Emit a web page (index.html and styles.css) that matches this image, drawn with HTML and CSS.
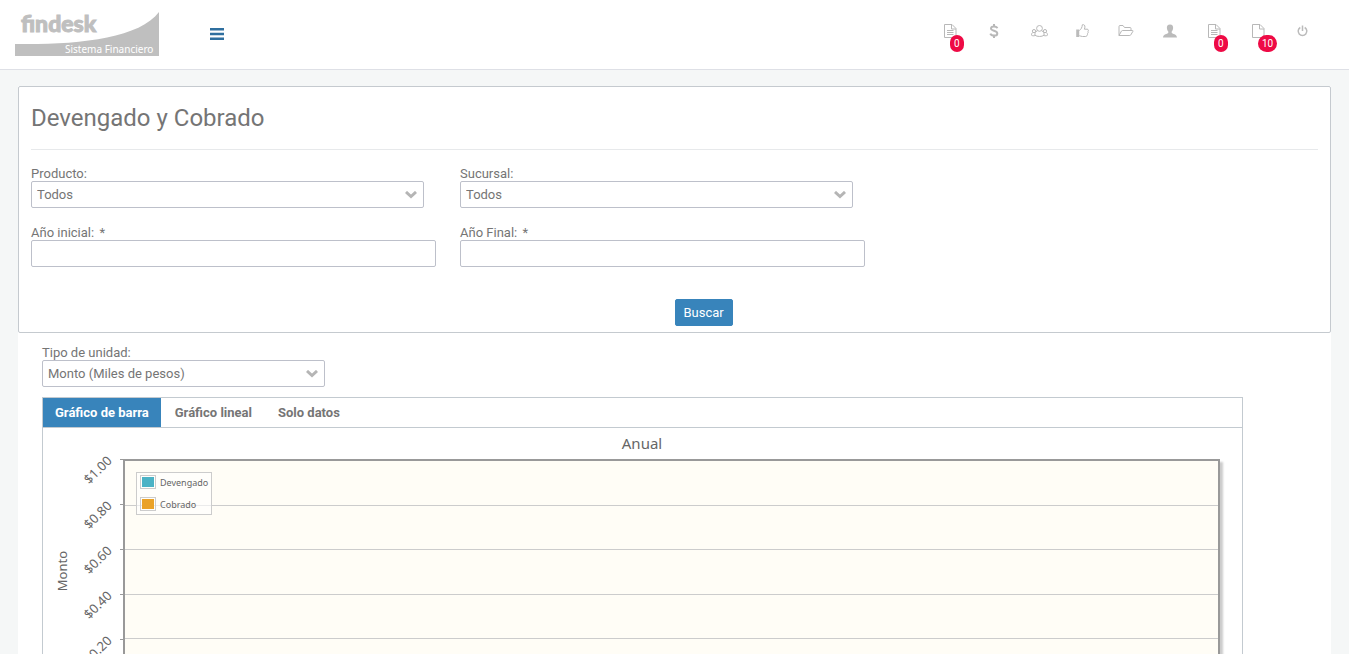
FILE: index.html
```html
<!DOCTYPE html>
<html lang="es">
<head>
<meta charset="utf-8">
<title>Devengado y Cobrado</title>
<link rel="stylesheet" href="styles.css">
</head>
<body>
<header class="topbar">
  <a class="logo" href="#" aria-label="findesk Sistema Financiero">
    <svg width="144" height="44" viewBox="0 0 144 44">
      <path d="M0 32C60 33 124 27 144 0V44H0Z" fill="#bfbfbf"/>
      <text class="logo-name" x="6" y="20">findesk</text>
      <text class="logo-sub" x="50" y="41">Sistema Financiero</text>
    </svg>
  </a>
  <button class="menu-button" type="button" aria-label="Menú">
    <svg width="14" height="12" viewBox="0 0 14 12" fill="#2f6f9f"><path d="M0 0h14v2.500H0zM0 4.700h14v2.500H0zM0 9.400h14v2.500H0z"/></svg>
  </button>
  <nav class="tools">
    <a href="#" aria-label="Documentos"><svg width="13" height="14" viewBox="0 0 13 14"><path class="line" d="M.5.5h7.500l4 4v9H.5zM7.500.5v4.500h4.500M3 6.500h6.500M3 8.500h6.500M3 10.500h6.500"/></svg><span class="badge">0</span></a>
    <a href="#" aria-label="Pagos"><svg width="10" height="14" viewBox="0 0 10 14"><path class="bold" d="M8.300 4.300C7.700 2 2 1.600 2 4.500c0 2.700 6.300 1.900 6.300 4.900 0 3-6 2.800-7 .3M5 0v2.500M5 11.500V14"/></svg></a>
    <a href="#" aria-label="Clientes"><svg class="group" width="17" height="14" viewBox="0 0 17 14"><path class="line" d="M8.500 1.500a2.800 2.800 0 0 1 0 5.800 2.800 2.800 0 0 1 0-5.800zM6.300 6.800C4.300 7.600 3.900 9 3.900 11.200c2.200 1.700 7 1.700 9.200 0 0-2.200-.4-3.600-2.400-4.400M3 5.500a1.500 1.500 0 0 1 0 3.200 1.500 1.500 0 0 1 0-3.200zM14 5.500a1.500 1.500 0 0 1 0 3.200 1.500 1.500 0 0 1 0-3.200zM1.700 8.500C.8 9 .5 9.900.5 11.200c1 .7 2.200.7 3.400.4M15.300 8.500c.9.500 1.200 1.400 1.200 2.700-1 .7-2.200.7-3.400.4"/></svg></a>
    <a href="#" aria-label="Autorizaciones"><svg width="13" height="14" viewBox="0 0 13 14"><path class="solid" d="M.2 5.500h3v7.500h-3z"/><path class="line" d="M3.300 6.500C5 5.500 6.200 3.500 6.300.8c1.500-.6 2.900.5 2.600 2.400L8.400 5.200h2.800c1.400 0 1.500 1.600.8 2.200.4.800.2 1.600-.4 2 .2.800-.1 1.300-.6 1.700 0 1-.5 1.400-1.300 1.400H6.500c-1.200 0-2-.6-3.200-.8"/></svg></a>
    <a href="#" aria-label="Carpetas"><svg width="16" height="14" viewBox="0 0 16 14"><path class="line" d="M1 11.500V2.500c0-.6.300-1 1-1h3l1.500 2H12c.6 0 1 .3 1 1v2M1 11.500l2.500-4.500c.2-.3.500-.5.900-.5H14.500c.5 0 .7.300.5.700L12.700 11c-.2.400-.5.500-.9.500z"/></svg></a>
    <a href="#" aria-label="Usuario"><svg width="14" height="14" viewBox="0 0 14 14"><path class="solid" d="M7 .5c2.400 0 3.300 1.500 3.100 3.600C10 6 9.300 7 8.700 7.600v1.200c.5 1.200 5.300 1.500 5.300 4.700H0c0-3.200 4.800-3.500 5.300-4.700V7.600C4.700 7 4 6 3.900 4.100 3.700 2 4.600.5 7 .5z"/></svg></a>
    <a href="#" aria-label="Solicitudes"><svg width="13" height="14" viewBox="0 0 13 14"><path class="line" d="M.5.5h7.500l4 4v9H.5zM7.500.5v4.500h4.500M3 6.500h6.500M3 8.500h6.500M3 10.500h6.500"/></svg><span class="badge">0</span></a>
    <a href="#" aria-label="Pendientes"><svg width="13" height="14" viewBox="0 0 13 14"><path class="line" d="M.5.5h7.500l4 4v9H.5zM7.500.5v4.500h4.500"/></svg><span class="badge">10</span></a>
    <a href="#" aria-label="Salir"><svg width="11" height="14" viewBox="0 0 11 14"><path class="power" d="M3.300 3.500a4.300 4.300 0 1 0 4.400 0M5.500 1.500v5.500"/></svg></a>
  </nav>
</header>
<main class="page">
  <form class="card">
    <h1 class="title">Devengado y Cobrado</h1>
    <div class="fields">
      <div class="field">
        <label for="producto">Producto:</label>
        <div class="select"><select id="producto"><option>Todos</option></select><svg class="chevron" width="12" height="8" viewBox="0 0 12 8"><path d="M1 1l5 4.500L11 1"/></svg></div>
      </div>
      <div class="field">
        <label for="sucursal">Sucursal:</label>
        <div class="select"><select id="sucursal"><option>Todos</option></select><svg class="chevron" width="12" height="8" viewBox="0 0 12 8"><path d="M1 1l5 4.500L11 1"/></svg></div>
      </div>
      <div class="field first-col">
        <label for="inicial">Año inicial: <span class="required">*</span></label>
        <input id="inicial" type="text">
      </div>
      <div class="field">
        <label for="final">Año Final: <span class="required">*</span></label>
        <input id="final" type="text">
      </div>
    </div>
    <button class="search" type="button">Buscar</button>
  </form>
  <section class="results">
    <div class="unit">
      <label for="unidad">Tipo de unidad:</label>
      <div class="select"><select id="unidad"><option>Monto (Miles de pesos)</option></select><svg class="chevron" width="12" height="8" viewBox="0 0 12 8"><path d="M1 1l5 4.500L11 1"/></svg></div>
    </div>
    <div class="tabs">
      <div class="tab-list" role="tablist">
        <button class="tab active" type="button" role="tab" aria-selected="true">Gráfico de barra</button>
        <button class="tab" type="button" role="tab">Gráfico lineal</button>
        <button class="tab" type="button" role="tab">Solo datos</button>
      </div>
      <div class="chart">
        <h2 class="chart-title">Anual</h2>
        <div class="chart-body">
          <div class="axis-name"><span>Monto</span></div>
          <div class="ticks">
            <div><span>$1.00</span></div><div><span>$0.80</span></div><div><span>$0.60</span></div><div><span>$0.40</span></div><div><span>$0.20</span></div>
          </div>
          <div class="marks"><i></i><i></i><i></i><i></i><i></i></div>
          <div class="plot">
            <i></i><i></i><i></i><i></i><i></i>
            <ul class="legend">
              <li><b class="swatch due"></b>Devengado</li>
              <li><b class="swatch paid"></b>Cobrado</li>
            </ul>
          </div>
        </div>
      </div>
    </div>
  </section>
</main>
</body>
</html>
```
FILE: styles.css
```css
* { box-sizing: border-box; }
body {
  margin: 0;
  height: 100vh;
  overflow: hidden;
  background: #f5f7f7;
  color: #757575;
  font: 13px/15px Roboto, sans-serif;
}
button, input, select { font: inherit; color: inherit; }

.topbar {
  display: flex;
  align-items: center;
  height: 70px;
  padding: 0 25px 2px 15px;
  background: #fff;
  border-bottom: 1px solid #dee0e6;
}
.logo { display: block; height: 44px; }
.logo svg { display: block; overflow: visible; }
.logo-name {
  font: 900 23px Lato, sans-serif;
  fill: #bfbfbf;
  stroke: #bfbfbf;
}
.logo-sub { font: 10px "Noto Sans", sans-serif; fill: #fff; }
.menu-button {
  display: flex;
  margin-left: 51px;
  padding: 0;
  border: 0;
  background: none;
}
.tools { display: flex; margin-left: auto; padding-bottom: 5px; }
.tools a {
  position: relative;
  display: flex;
  justify-content: center;
  width: 44px;
  text-decoration: none;
}
.group { margin-left: 2px; }
.line, .bold, .power { fill: none; stroke: #b8b8b8; }
.bold { stroke-width: 2; }
.power { stroke: #bbb; stroke-width: 1.5; }
.solid { fill: #bbb; }
.badge {
  position: absolute;
  left: 22px;
  top: 11px;
  padding: 1px 4px;
  border-radius: 9px;
  background: #ee0a45;
  color: #fff;
  font-size: 10px;
}

.page { min-height: 100vh; margin: 16px 18px 0; background: #fff; }
.card {
  padding: 0 12px 6px;
  border: 1px solid #c5cacf;
  border-radius: 2px;
}
.title {
  margin: 0 0 16px;
  padding: 17px 0 16px;
  border-bottom: 1px solid #e7e9eb;
  font-size: 24px;
  line-height: 29px;
  font-weight: 400;
}
.fields { display: grid; grid-template-columns: repeat(3, 1fr); row-gap: 17px; }
.field { padding-right: 24px; }
.field .select { margin-right: 12px; }
.first-col { grid-column: 1; }
.required { margin-left: 2px; }
label { display: block; }
select, input {
  display: block;
  width: 100%;
  height: 27px;
  padding: 0 5px;
  border: 1px solid #bdc0ca;
  border-radius: 2px;
  background: #fff;
  appearance: none;
}
.select { position: relative; }
.chevron { position: absolute; right: 7px; top: 10px; pointer-events: none; }
.chevron path { fill: none; stroke: #b5b5b5; stroke-width: 3; }
.search {
  display: block;
  height: 27px;
  margin: 32px 0 0 50%;
  padding: 0 8px;
  border: 1px solid #3884bb;
  border-radius: 2px;
  background: #3884bb;
  color: #fff;
}

.results { padding: 12px 88px 0 24px; }
.unit { width: 283px; margin-bottom: 10px; }
.tabs { border: 1px solid #c3cad0; }
.tab-list { display: flex; gap: 2px; border-bottom: 1px solid #c3cad0; }
.tab {
  height: 29px;
  padding: 0 12px;
  border: 0;
  background: none;
  font-weight: 700;
}
.active { background: #3884bb; color: #fff; }

.chart {
  padding: 4px 22px 20px 8px;
  color: #666;
  font-family: "Noto Sans", sans-serif;
}
.chart-title {
  margin: 0 0 5px 13px;
  font-size: 15px;
  line-height: 22px;
  font-weight: 400;
  text-align: center;
}
.chart-body { display: flex; height: 225px; }
.axis-name {
  display: flex;
  align-items: center;
  justify-content: center;
  width: 22px;
  font-size: 13px;
}
.axis-name span { writing-mode: vertical-rl; transform: rotate(180deg); }
.ticks { width: 47px; }
.ticks div, .marks i, .plot > i { display: block; height: 20%; }
.ticks span {
  display: block;
  width: 38px;
  margin-left: 2px;
  padding-top: 6px;
  font-size: 13px;
  text-align: right;
  transform: rotate(-45deg);
}
.marks { width: 3px; }
.marks i { border-top: 1px solid #999; }
.plot {
  position: relative;
  flex: 1;
  border: 2px solid #999;
  background: #fffdf6;
  box-shadow: 3px 3px 2px #ccc;
}
.plot > i + i { border-top: 1px solid #ccc; }
.legend {
  position: absolute;
  left: 11px;
  top: 11px;
  display: grid;
  gap: 6px;
  margin: 0;
  padding: 1px 3px 2px;
  border: 1px solid #ccc;
  background: rgba(255, 255, 255, .6);
  list-style: none;
  font-size: 9px;
}
.legend li { display: flex; align-items: center; gap: 4px; height: 16px; }
.swatch { width: 16px; height: 14px; padding: 1px; border: 1px solid #ccc; background-clip: content-box; }
.due { background-color: #4bb2c5; }
.paid { background-color: #eaa228; }
```
